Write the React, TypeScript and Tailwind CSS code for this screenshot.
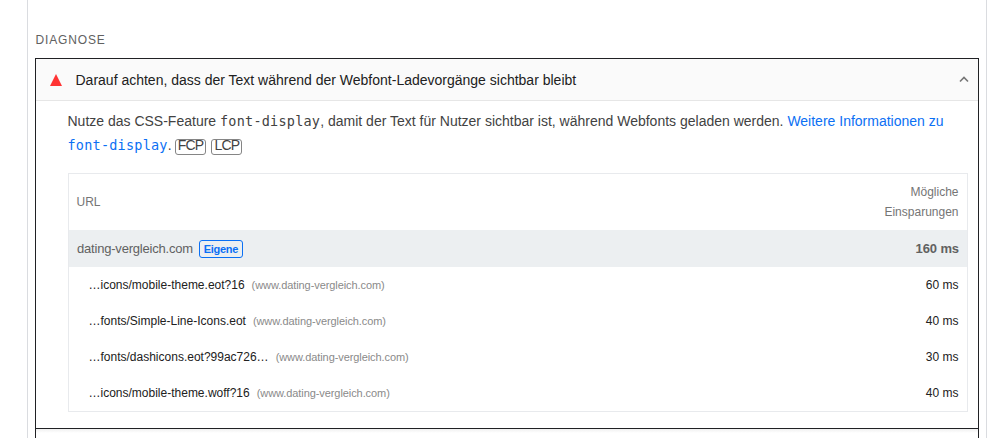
type UrlItem = {
  id: string;
  path: string;
  host: string;
  savings: number;
};

const items: UrlItem[] = [
  { id: "eot", path: "…icons/mobile-theme.eot?16", host: "www.dating-vergleich.com", savings: 60 },
  { id: "line", path: "…fonts/Simple-Line-Icons.eot", host: "www.dating-vergleich.com", savings: 40 },
  { id: "dash", path: "…fonts/dashicons.eot?99ac726…", host: "www.dating-vergleich.com", savings: 30 },
  { id: "woff", path: "…icons/mobile-theme.woff?16", host: "www.dating-vergleich.com", savings: 40 },
];

export default function App() {
  return (
    <div className="h-[438px] overflow-hidden bg-white pl-[27px] font-['Liberation_Sans',Arial,sans-serif] text-[#212121]">
      <main className="h-full w-[960px] border-x border-[#dadce0] px-[7px] pt-[30px]">
        <h2 className="h-7 pl-[0.5px] text-xs leading-5 tracking-[0.85px] text-[#616161] uppercase">Diagnose</h2>

        <section className="h-[371px] w-[944px] border border-[#202124]">
          <header className="flex h-[42px] items-center border-b border-[#e6e6e6] bg-[#fafafa] pr-[9px] pl-[14px]">
            <svg className="h-3 w-3" viewBox="0 0 12 12" aria-hidden="true">
              <path d="M6 0L12 12H0z" fill="#ff3333" />
            </svg>
            <h3 className="ml-[13.5px] grow text-sm">
              Darauf achten, dass der Text während der Webfont-Ladevorgänge sichtbar bleibt
            </h3>
            <svg className="h-2.5 w-2.5" viewBox="0 0 10 10" aria-hidden="true">
              <path d="M1 6.5L5 2.5L9 6.5" fill="none" stroke="#757575" strokeWidth="1.6" />
            </svg>
          </header>

          <div className="pt-2 pr-2.5 pl-8">
            <p className="-ml-[0.5px] h-16 text-sm leading-6 text-[#424242]">
              Nutze das CSS-Feature <Code />, damit der Text für Nutzer sichtbar ist, während Webfonts geladen
              werden.{" "}
              <a href="#font-display" className="text-[#0b70f4]">
                Weitere Informationen zu <Code />
              </a>
              . <Metric label="FCP" /> <Metric label="LCP" />
            </p>
            <UrlTable />
          </div>
        </section>

        <section className="h-9 w-[944px] border-x border-[#202124] bg-[linear-gradient(#f0f0f0,#ffffff_4px)]" />
      </main>
    </div>
  );
}

function UrlTable() {
  return (
    <div className="border border-[#e8eaed] text-xs">
      <div className="flex h-14 items-center justify-between pr-[8.5px] pl-[7.5px] leading-5 text-[#757575]">
        <span>URL</span>
        <span className="w-20 text-right">Mögliche Einsparungen</span>
      </div>
      <div className="flex h-[37px] items-center justify-between bg-[#eceff1] px-2 text-[13px] text-[#616161]">
        <span className="flex items-center">
          <span className="tracking-[-0.2px]">dating-vergleich.com</span>
          <span className="ml-1.5 flex h-[18px] w-11 items-center justify-center rounded-[3px] border border-[#0b70f4] pt-px text-[11px] font-bold tracking-[-0.3px] text-[#0b70f4]">
            Eigene
          </span>
        </span>
        <span className="font-bold tracking-[-0.1px]">160 ms</span>
      </div>
      {items.map((item) => (
        <div key={item.id} className="flex h-9 items-center justify-between pr-[8.5px] pl-[19.5px]">
          <span>
            {item.path}
            <span className="ml-[7px] text-[11px] tracking-[-0.08px] text-[#8a8a8a]">({item.host})</span>
          </span>
          <span>{item.savings} ms</span>
        </div>
      ))}
    </div>
  );
}

function Code() {
  return (
    <code className="font-['DejaVu_Sans_Mono',monospace] text-[13.5px] leading-none tracking-[0.22px]">
      font-display
    </code>
  );
}

function Metric({ label }: { label: string }) {
  return (
    <span className="mr-0.5 -ml-[0.5px] inline-block h-4 w-[31px] rounded-[3px] border border-[#858585] text-center text-[14px] leading-[11px] tracking-[-0.8px]">
      {label}
    </span>
  );
}
